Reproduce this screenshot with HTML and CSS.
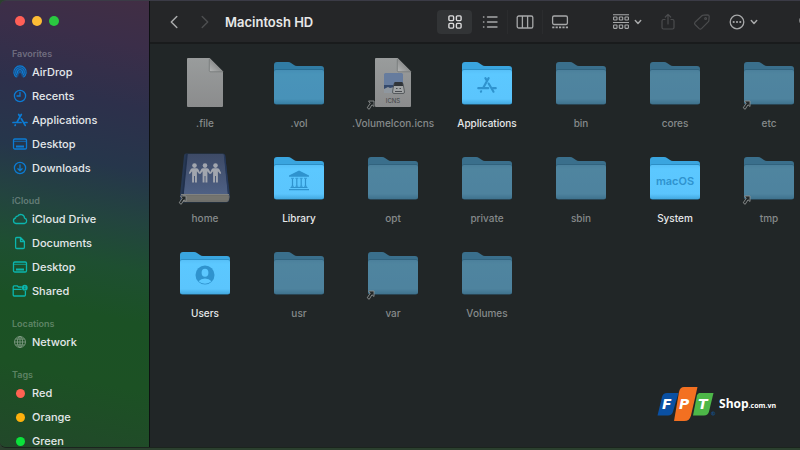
FILE: index.html
```html
<!DOCTYPE html>
<html lang="en">
<head>
<meta charset="utf-8">
<title>Macintosh HD</title>
<link rel="stylesheet" href="styles.css">
</head>
<body>
<svg class="defs" aria-hidden="true">
  <defs>
    <linearGradient id="front" x1="0" y1="0" x2="0" y2="1">
      <stop offset="0" stop-color="#57c0f8"/><stop offset=".12" stop-color="#5cc8ff"/><stop offset=".85" stop-color="#5bc5fd"/><stop offset="1" stop-color="#43a9e0"/>
    </linearGradient>
    <linearGradient id="paper" x1="0" y1="0" x2="0" y2="1">
      <stop offset="0" stop-color="#999c9c"/><stop offset="1" stop-color="#8b8c8d"/>
    </linearGradient>
    <linearGradient id="cover" x1="0" y1="0" x2="0" y2="1">
      <stop offset="0" stop-color="#3d4a66"/><stop offset="1" stop-color="#4e6084"/>
    </linearGradient>
    <linearGradient id="fold" x1="0" y1="1" x2="1" y2="0">
      <stop offset="0" stop-color="#b4b6b6"/><stop offset=".6" stop-color="#858787"/><stop offset="1" stop-color="#6e7070"/>
    </linearGradient>
    <symbol id="folder" viewBox="0 0 60 54">
      <path d="M5 12V9q0-3 3-3h11q2 0 3 1l3 2q1 1 3 1h24q3 0 3 3v6H5z" fill="#3aa5df"/>
      <path d="M5 15q0-2 2-2h46q2 0 2 2v31q0 2.500-2.500 2.500h-45Q5 48.500 5 46z" fill="#2c8fc6"/>
      <path d="M5 16q0-2 2-2h46q2 0 2 2v29.500q0 2.500-2.500 2.500h-45Q5 48 5 45.500z" fill="url(#front)"/>
    </symbol>
    <symbol id="file" viewBox="0 0 60 54">
      <path d="M13 2h21.500L48 15.500V50q0 1-1 1H13q-1 0-1-1V3q0-1 1-1z" fill="url(#paper)"/>
      <path d="M34.500 2L48 15.500H36q-1.500 0-1.500-1.500z" fill="url(#fold)"/>
      <path d="M34.300 3v11.500q0 1.300 1.500 1.300H48" fill="none" stroke="#707273" stroke-width=".7"/>
    </symbol>
    <symbol id="alias" viewBox="0 0 60 54">
      <path d="M5.500 45h5.500v5.500l-2-1.700-2.800 4.500-2-1.500 3-4.500z" fill="#222728" stroke="#8f9292" stroke-width=".9" stroke-linejoin="round"/>
    </symbol>
    <symbol id="app" viewBox="0 0 16 16">
      <g fill="none" stroke="currentColor" stroke-width="1.700" stroke-linecap="round"><path d="M9.300 2.500L5 10.200M6.700 2.500l1.200 2M9.300 6.800l3.900 6.600M1 10.500h8M12.700 10.500H15M3.300 13l-.2.400"/></g>
    </symbol>
    <symbol id="desktop" viewBox="0 0 16 16">
      <rect x="1.500" y="3" width="13" height="10" rx="1.300" fill="none" stroke="currentColor" stroke-width="1.300"/><path d="M2 5.300h12" stroke="currentColor" stroke-width=".8"/><path d="M4 10.500h8" stroke="currentColor" stroke-width="2"/>
    </symbol>
    <symbol id="chev" viewBox="0 0 8 8"><path d="M1.300 2.500L4 5.400l2.700-2.900" fill="none" stroke="currentColor" stroke-width="1.500" stroke-linecap="round" stroke-linejoin="round"/></symbol>
    <symbol id="person" viewBox="0 0 12 20">
      <circle cx="6" cy="2.600" r="2.300"/><path d="M4 5.200h4q1.200 0 1.800 1l2 4-1.200.8L8.400 8.200V19.500H6.500V13h-1v6.500H3.600V8.200L1.400 11 .2 10.200l2-4q.6-1 1.800-1z"/>
    </symbol>
  </defs>
</svg>

<div class="window">
  <aside class="sidebar">
    <div class="lights">
      <button class="light close" aria-label="Close"></button>
      <button class="light minimise" aria-label="Minimise"></button>
      <button class="light expand" aria-label="Zoom"></button>
    </div>
    <nav class="section blue">
      <h2>Favorites</h2>
      <a href="#"><svg viewBox="0 0 16 16" fill="none" stroke="currentColor" stroke-width="1.100"><circle cx="8" cy="8" r="6" fill="currentColor" fill-opacity=".35" stroke="none"/><path d="M4.600 13.300a6.200 6.200 0 1 1 6.800 0M5.300 11.400a4.300 4.300 0 1 1 5.400 0M6.300 9.700a2.400 2.400 0 1 1 3.400 0"/><path d="M8 8.500L5.500 14h5z" fill="#2b2f4d" stroke="none"/><circle cx="8" cy="8" r=".8" fill="currentColor" stroke="none"/></svg>AirDrop</a>
      <a href="#"><svg viewBox="0 0 16 16" fill="none" stroke="currentColor" stroke-width="1.300" stroke-linecap="round"><circle cx="8" cy="8" r="5.600"/><path d="M8 4.500V8H5"/></svg>Recents</a>
      <a href="#"><svg><use href="#app"/></svg>Applications</a>
      <a href="#"><svg><use href="#desktop"/></svg>Desktop</a>
      <a href="#"><svg viewBox="0 0 16 16" fill="none" stroke="currentColor" stroke-width="1.300" stroke-linecap="round" stroke-linejoin="round"><circle cx="8" cy="8" r="5.600"/><path d="M8 5v5.700M5.900 8.700L8 10.800l2.100-2.100"/></svg>Downloads</a>
    </nav>
    <nav class="section teal">
      <h2>iCloud</h2>
      <a href="#"><svg viewBox="0 0 16 16" fill="none" stroke="currentColor" stroke-width="1.300"><path d="M4 12.500a2.800 2.800 0 0 1-.4-5.500 2 2 0 0 1 2.100-1.800 3.700 3.700 0 0 1 6.800 1.900 2.800 2.800 0 0 1 .2 5.400z" stroke-linejoin="round"/></svg>iCloud Drive</a>
      <a href="#"><svg viewBox="0 0 16 16" fill="none" stroke="currentColor" stroke-width="1.300" stroke-linejoin="round"><path d="M4.600 2.500H8.500L12.400 6.500V12.300q0 1.200-1.200 1.200H4.800q-1.200 0-1.200-1.200V3.500q0-1 1-1zM8.500 2.500v4h3.900"/></svg>Documents</a>
      <a href="#"><svg><use href="#desktop"/></svg>Desktop</a>
      <a href="#"><svg viewBox="0 0 16 16" fill="none" stroke="currentColor" stroke-width="1.300"><path d="M9.800 4H6.500L5.300 2.900H2.200q-1 0-1 1v8.100q0 1 1 1h10.200q1 0 1-1V7.700M1.200 6.400h8.500"/><circle cx="12.800" cy="4.700" r="2.900" fill="currentColor" stroke="none"/><path d="M12.800 3.200v.8M12.800 4.500v1.700" stroke="#20502e" stroke-width=".8"/></svg>Shared</a>
    </nav>
    <nav class="section grey">
      <h2>Locations</h2>
      <a href="#"><svg viewBox="0 0 16 16" fill="none" stroke="currentColor" stroke-width=".8"><circle cx="8" cy="8" r="5.500"/><ellipse cx="8" cy="8" rx="2.600" ry="5.500"/><path d="M2.500 8h11M3.400 5.100h9.200M3.400 10.900h9.200M8 2.500v11"/></svg>Network</a>
    </nav>
    <nav class="section">
      <h2>Tags</h2>
      <a href="#"><i class="dot red"></i>Red</a>
      <a href="#"><i class="dot orange"></i>Orange</a>
      <a href="#"><i class="dot green"></i>Green</a>
    </nav>
  </aside>

  <main class="main">
    <header class="toolbar">
      <button class="nav" aria-label="Back"><svg width="16" height="16" viewBox="0 0 16 16"><path d="M10.800 2.500L5.300 8l5.500 5.500" fill="none" stroke="currentColor" stroke-width="1.500" stroke-linecap="round" stroke-linejoin="round"/></svg></button>
      <button class="nav off" aria-label="Forward"><svg width="16" height="16" viewBox="0 0 16 16"><path d="M5.200 2.500L10.700 8l-5.500 5.500" fill="none" stroke="currentColor" stroke-width="1.500" stroke-linecap="round" stroke-linejoin="round"/></svg></button>
      <h1>Macintosh HD</h1>
      <div class="views">
        <button class="on" aria-label="Icons"><svg width="18" height="18" viewBox="0 0 18 18" fill="none" stroke="currentColor" stroke-width="1.400"><rect x="2.900" y="2.900" width="4.700" height="4.700" rx="1"/><rect x="10.400" y="2.900" width="4.700" height="4.700" rx="1"/><rect x="2.900" y="10.400" width="4.700" height="4.700" rx="1"/><rect x="10.400" y="10.400" width="4.700" height="4.700" rx="1"/></svg></button>
        <button aria-label="List"><svg width="18" height="18" viewBox="0 0 18 18" stroke="currentColor" stroke-width="1.400" stroke-linecap="round"><path d="M6.500 4h9.500M6.500 9h9.500M6.500 14h9.500M2.500 4h.4M2.500 9h.4M2.500 14h.4"/></svg></button>
        <button aria-label="Columns"><svg width="18" height="18" viewBox="0 0 18 18" fill="none" stroke="currentColor" stroke-width="1.300"><rect x="1.200" y="3" width="15.600" height="12" rx="1.600"/><path d="M6.400 3v12M11.600 3v12"/></svg></button>
        <button aria-label="Gallery"><svg width="18" height="18" viewBox="0 0 18 18" fill="none" stroke="currentColor" stroke-width="1.300"><rect x="1.600" y="3" width="14.800" height="8.500" rx="1.400"/><path d="M1.200 14.400h16" stroke-width="1.800" stroke-dasharray="2.200 1.200"/></svg></button>
      </div>
      <button class="menu group" aria-label="Group"><svg width="18" height="18" viewBox="0 0 18 18" fill="none" stroke="currentColor" stroke-width="1.100"><path d="M1 1.800h16M1 9.500h16"/><rect x="1.600" y="4" width="3.400" height="3" rx=".6"/><rect x="7.300" y="4" width="3.400" height="3" rx=".6"/><rect x="13" y="4" width="3.400" height="3" rx=".6"/><rect x="1.600" y="12" width="3.400" height="3.400" rx=".6"/><rect x="7.300" y="12" width="3.400" height="3.400" rx=".6"/><rect x="13" y="12" width="3.400" height="3.400" rx=".6"/></svg><svg width="8" height="8"><use href="#chev"/></svg></button>
      <button class="tool off" aria-label="Share"><svg width="18" height="18" viewBox="0 0 18 18" fill="none" stroke="currentColor" stroke-width="1.200" stroke-linecap="round" stroke-linejoin="round"><path d="M6 6.500H4.500q-1.500 0-1.500 1.500v6.500Q3 16 4.500 16h9q1.500 0 1.500-1.500V8q0-1.500-1.500-1.500H12M9 11V1.500M6.300 4L9 1.300 11.700 4"/></svg></button>
      <button class="tool off" aria-label="Tags"><svg width="18" height="18" viewBox="0 0 18 18" fill="none" stroke="currentColor" stroke-width="1.200" stroke-linejoin="round"><path d="M10.500 2.200l4-.4q1.600 0 1.700 1.600l-.3 4q0 .8-.7 1.500L8.500 15.600q-1.200 1-2.300 0L2 11.500q-1-1.100 0-2.200L8.900 2.800q.8-.6 1.600-.6z"/><circle cx="12.600" cy="5.400" r=".9"/></svg></button>
      <button class="menu more" aria-label="More"><svg width="18" height="18" viewBox="0 0 18 18"><circle cx="9" cy="9" r="6.800" fill="none" stroke="currentColor" stroke-width="1.300"/><g fill="currentColor"><circle cx="5.700" cy="9" r="1.100"/><circle cx="9" cy="9" r="1.100"/><circle cx="12.300" cy="9" r="1.100"/></g></svg><svg width="8" height="8"><use href="#chev"/></svg></button>
      <button class="search" aria-label="Search"><svg width="14" height="14" viewBox="0 0 14 14" fill="none" stroke="currentColor" stroke-width="1.400"><circle cx="5.500" cy="5.500" r="4.500"/><path d="M9 9l4 4"/></svg></button>
    </header>

    <div class="files">
      <figure class="tile dim"><svg><use href="#file"/></svg><figcaption>.file</figcaption></figure>
      <figure class="tile dim"><svg class="faded bright"><use href="#folder"/></svg><figcaption>.vol</figcaption></figure>
      <figure class="tile dim"><svg viewBox="0 0 60 54"><use href="#file"/><rect x="21" y="17" width="19" height="20" rx="1.500" fill="#667c9e"/><path d="M21 29h19v8H21z" fill="#34496b"/><path d="M21 33l4-2 2 1 4-1v6H21z" fill="#8f979f"/><path d="M31 27.500h9l1.500 8.500q0 1.500-1.500 1.500h-9q-1.500 0-1.500-1.500z" fill="#a1a4a5" stroke="#3b4044" stroke-width=".7"/><path d="M31.500 26h8l.6 4h-9.200z" fill="#303438"/><path d="M32 35.500h7M33 32.500h1.500M36.500 32.500H38" stroke="#303438" stroke-width=".8"/><text class="icns" x="30" y="47" text-anchor="middle">ICNS</text><use href="#alias"/></svg><figcaption>.VolumeIcon.icns</figcaption></figure>
      <figure class="tile"><svg viewBox="0 0 60 54"><use href="#folder"/><svg class="emblem" x="20" y="19" width="20" height="20"><use href="#app"/></svg></svg><figcaption>Applications</figcaption></figure>
      <figure class="tile dim"><svg class="faded"><use href="#folder"/></svg><figcaption>bin</figcaption></figure>
      <figure class="tile dim"><svg class="faded"><use href="#folder"/></svg><figcaption>cores</figcaption></figure>
      <figure class="tile dim"><svg viewBox="0 0 60 54"><use class="faded" href="#folder"/><use href="#alias"/></svg><figcaption>etc</figcaption></figure>

      <figure class="tile dim"><svg viewBox="0 0 60 54"><path d="M9 4.500L5 44v6q0 1.500 2 1.500h44q3 0 3.500-3l.5-4L50 4q0-1.500-2-1.500H11Q9.200 2.500 9 4.500z" fill="#273853"/><path d="M13 3h34.500q1.500 0 1.600 1.500L53 43H8.500L12 4q0-1 1-1z" fill="url(#cover)"/><path d="M12 3L8 43" stroke="#20304c" stroke-width="1.600"/><path d="M49.500 4L53.500 43" stroke="#26385a" stroke-width="1.400"/><path d="M8 44h45q2 0 1.500 2l-.6 3q-.4 2-2.400 2H8q-2-3 0-7z" fill="#6f6f6b"/><path d="M8 46h45M8 48h45" stroke="#85857f" stroke-width=".5"/><path d="M6 43.500h48" stroke="#97968d" stroke-width=".8"/><g fill="#a2a6ae"><use href="#person" x="13.500" y="12" width="12" height="20"/><use href="#person" x="24" y="12" width="12" height="20"/><use href="#person" x="34.500" y="12" width="12" height="20"/></g><use href="#alias"/></svg><figcaption>home</figcaption></figure>
      <figure class="tile"><svg viewBox="0 0 60 54"><use href="#folder"/><g class="emblem"><path d="M30 19.500l10 5v1.200H20v-1.200z" fill="currentColor"/><path d="M20 38.600h20M21.500 36.500h17M23.500 27.500v8M27.800 27.500v8M32.200 27.500v8M36.500 27.500v8" stroke="currentColor" stroke-width="1.200"/><path d="M22 27.300h3M26.300 27.300h3M30.700 27.300h3M35 27.300h3M22 35.300h3M26.300 35.300h3M30.700 35.300h3M35 35.300h3" stroke="currentColor" stroke-width=".8"/></g></svg><figcaption>Library</figcaption></figure>
      <figure class="tile dim"><svg class="faded"><use href="#folder"/></svg><figcaption>opt</figcaption></figure>
      <figure class="tile dim"><svg class="faded"><use href="#folder"/></svg><figcaption>private</figcaption></figure>
      <figure class="tile dim"><svg class="faded"><use href="#folder"/></svg><figcaption>sbin</figcaption></figure>
      <figure class="tile"><svg viewBox="0 0 60 54"><use href="#folder"/><text class="macos" x="30" y="34" text-anchor="middle">macOS</text></svg><figcaption>System</figcaption></figure>
      <figure class="tile dim"><svg viewBox="0 0 60 54"><use class="faded" href="#folder"/><use href="#alias"/></svg><figcaption>tmp</figcaption></figure>

      <figure class="tile"><svg viewBox="0 0 60 54"><use href="#folder"/><circle cx="30" cy="29" r="9.500" fill="#2f93ce"/><ellipse cx="30" cy="26.800" rx="3.400" ry="4" fill="#5cc8ff"/><path d="M23.500 35.300q2.500-2.800 6.500-2.800t6.500 2.800q-2.700 2.400-6.500 2.400t-6.500-2.400z" fill="#5cc8ff"/></svg><figcaption>Users</figcaption></figure>
      <figure class="tile dim"><svg class="faded"><use href="#folder"/></svg><figcaption>usr</figcaption></figure>
      <figure class="tile dim"><svg viewBox="0 0 60 54"><use class="faded" href="#folder"/><use href="#alias"/></svg><figcaption>var</figcaption></figure>
      <figure class="tile dim"><svg class="faded"><use href="#folder"/></svg><figcaption>Volumes</figcaption></figure>
    </div>
  </main>
</div>

<div class="brand">
  <svg width="60" height="38" viewBox="0 0 60 38">
    <path d="M10 7h11.500L16 25.500q-1 4-5 4H.5L5 11q1-4 5-4z" fill="#0a50a3"/>
    <path d="M42 7h14.500L52 25.500q-1 4-5 4H36L40 9z" fill="#4db748"/>
    <path d="M27 1h13.500L34 29.500q-1.500 5.500-6.500 5.500H17L22 6q1-5 5-5z" fill="#f37021"/>
    <text class="fpt" x="5" y="23">F</text><text class="fpt" x="22" y="23">P</text><text class="fpt" x="41" y="23">T</text>
    <circle cx="56" cy="27.500" r="1.700" fill="none" stroke="#164b83" stroke-width=".7"/>
    <text class="reg" x="55" y="29">R</text>
  </svg>
  <p><span class="shop">Shop</span><span class="domain">.com.vn</span></p>
</div>
</body>
</html>
```
FILE: styles.css
```css
* { box-sizing: border-box; }

body {
  margin: 0;
  height: 100vh;
  overflow: hidden;
  padding-bottom: 2px;
  background: #2b402e;
  font-family: Inter, "Liberation Sans", sans-serif;
  color: #e6e8ea;
}

.defs { position: absolute; width: 0; height: 0; }

button {
  padding: 0;
  border: 0;
  background: none;
  color: inherit;
  font: inherit;
}

.window {
  display: flex;
  height: 100%;
  overflow: hidden;
  border-top: 1px solid #3b3b46;
  border-bottom: 1px solid #1b241e;
  border-radius: 6px 0 0 6px;
}

/* Sidebar */
.sidebar {
  flex: 0 0 150px;
  overflow: hidden;
  border-right: 1px solid #0d1112;
  background: linear-gradient(192deg, #412e44 0%, #3b2e49 10%, #2d304b 23%, #26364b 36%, #23443f 47%, #1e4f31 57%, #1b5125 68%, #1c5124 82%, #22482a 100%);
}

.lights {
  display: flex;
  gap: 7px;
  padding: 15px 15px 22px;
}

.light {
  width: 10px;
  height: 10px;
  border-radius: 50%;
}

.close { background: #ff5f57; }
.minimise { background: #fdbc35; }
.expand { background: #2ac840; }

.section { margin-bottom: 15px; }

.section h2 {
  margin: 0;
  padding-left: 12px;
  font-size: 9px;
  font-weight: 600;
  line-height: 12px;
  color: rgba(255, 255, 255, 0.3);
}

.section a {
  display: flex;
  align-items: center;
  gap: 4px;
  height: 24px;
  padding-left: 12px;
  font-size: 11px;
  font-weight: 500;
  color: #e4e8ea;
  text-decoration: none;
}

.section svg {
  flex: none;
  width: 16px;
  height: 16px;
}

.blue svg { color: #0c7bd3; }
.teal svg { color: #0bb5ad; }
.grey svg { color: #86a08a; }

.dot {
  width: 9px;
  height: 9px;
  margin: 0 3px 0 4px;
  border-radius: 50%;
}

.red { background: #ff6252; }
.orange { background: #fdb10d; }
.green { background: #0be23b; }

/* Content */
.main {
  flex: 1;
  min-width: 0;
  overflow: hidden;
  background: #212627;
}

.toolbar {
  display: flex;
  align-items: center;
  height: 43px;
  padding: 0 8px;
  border-bottom: 2px solid #191b1c;
  background: #252628;
  color: #a7a8a9;
}

.toolbar button {
  flex: none;
  display: flex;
  align-items: center;
  justify-content: center;
  height: 24px;
}

.toolbar .nav { width: 31px; }
.toolbar .off { color: #4b4c4e; }

.toolbar h1 {
  flex: 1 0 217px;
  margin: 0;
  padding-left: 5px;
  font-size: 13px;
  font-weight: 600;
  color: #e8e8e9;
}

.views { display: flex; }
.views button { width: 35px; }
.views button:nth-child(n + 3) { border-left: 1px solid #2b2c2e; }

.views .on {
  border-radius: 4px;
  background: #323436;
  color: #dcdcdd;
}

.toolbar .menu {
  gap: 4px;
  width: 30px;
}

.toolbar .group { margin: 0 9px 0 35px; }
.toolbar .tool { width: 34px; }
.toolbar .more { margin: 0 41px 0 9px; }

.files {
  display: grid;
  grid-template-columns: repeat(auto-fill, 94px);
  grid-auto-rows: 95px;
  margin-right: -20px;
  padding: 12px 0 0 8px;
}

.tile {
  display: flex;
  flex-direction: column;
  align-items: center;
  gap: 5px;
  margin: 0;
}

.tile > svg {
  width: 60px;
  height: 54px;
}

.tile figcaption {
  font-size: 10px;
  font-weight: 500;
  line-height: 16px;
  white-space: nowrap;
}

.dim figcaption { color: #868a8b; }

.faded {
  opacity: 0.6;
  filter: saturate(0.8);
}

.bright {
  opacity: 0.68;
  filter: none;
}

.emblem { color: #2f93ce; }

.icns {
  font-size: 6px;
  fill: #414446;
}

.macos {
  font-size: 11px;
  font-weight: 600;
  fill: #2f93ce;
}

/* Watermark over the window */
.brand {
  position: absolute;
  right: 24px;
  bottom: 26px;
  display: flex;
  align-items: center;
  gap: 2px;
  font-family: "Open Sans", sans-serif;
  font-weight: 700;
  color: #fff;
}

.brand p {
  margin: 0;
  font-size: 12px;
  line-height: 16px;
}

.domain { font-size: 7px; }

.fpt {
  font-family: "DejaVu Sans", sans-serif;
  font-size: 14px;
  font-style: italic;
  font-weight: 700;
  fill: #fff;
}

.reg {
  font-size: 3px;
  fill: #164b83;
}
```
